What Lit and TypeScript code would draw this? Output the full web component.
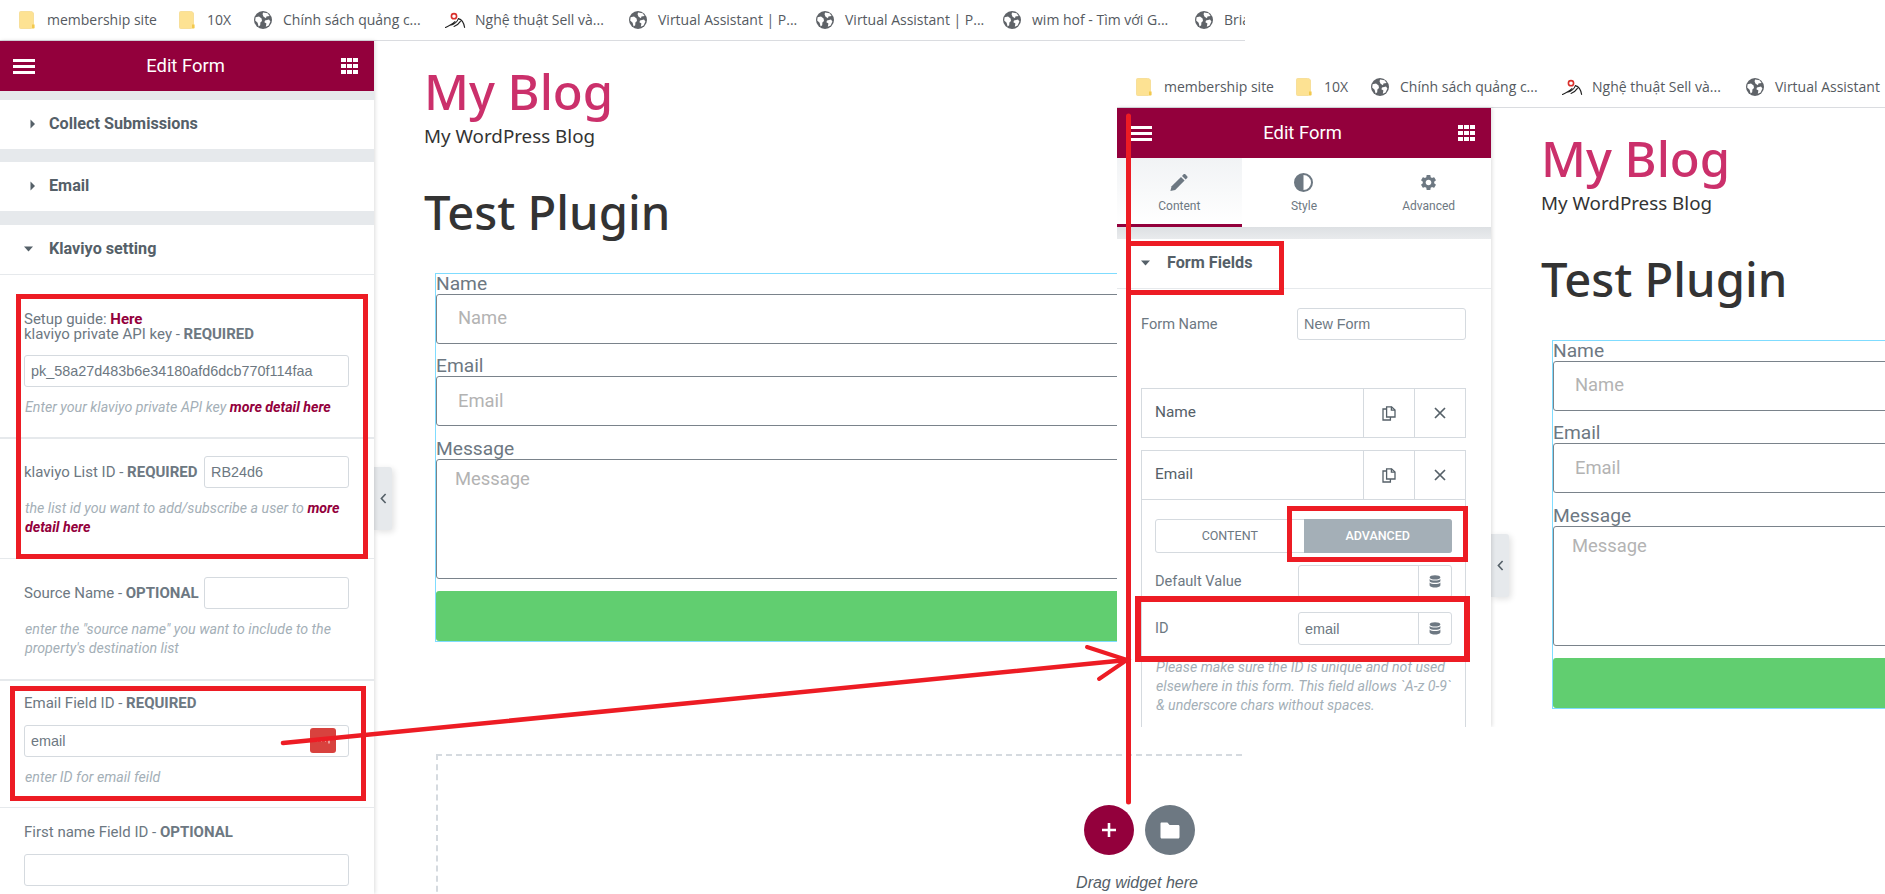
import { LitElement, html, css, svg } from "lit";
import { customElement, property } from "lit/decorators.js";

const CRIMSON = css`#93003c`;

const caretRight = html`<svg class="caret" width="25" height="10" viewBox="0 0 25 10"><path d="M6.5 0.5 L11 5 L6.5 9.5 Z" fill="#556068"/></svg>`;
const caretDown = html`<svg class="caret" width="25" height="10" viewBox="0 0 25 10"><path d="M0 2.5 H9 L4.5 7.5 Z" fill="#556068"/></svg>`;

const globe = html`<svg width="18" height="18" viewBox="0 0 18 18"><circle cx="9" cy="9" r="9" fill="#5f6368"/><path d="M1.6 6.2 L5 5.6 L7.6 7.6 L8 10 L6.4 11.4 L6.2 14.2 L4.6 15.6 L3.6 11.8 L1.2 9.6Z M9 1.6 L13.6 2.2 L15.6 5 L12.4 5.6 L12 7.2 L9.6 5.8 L8.6 3.6Z M11 9.4 L15 8.6 L16.4 10.4 L14.6 14.4 L11.8 15.8 L12.4 12.6 L10.4 11.2Z" fill="#fff"/></svg>`;
const folderMark = html`<svg width="16" height="18" viewBox="0 0 16 18"><path d="M1.5 0.5 H11.5 C13.5 0.5 14.5 1.5 14.5 3 V14 L12.5 17.5 H1.5 C0.8 17.5 0.5 17 0.5 16.5 V1.5 C0.5 1 0.8 0.5 1.5 0.5Z" fill="#fde293" stroke="#f7df9a"/><path d="M13 13.5 H15.6 V16.6 C15.6 17.2 15.2 17.6 14.6 17.6 H13Z" fill="#f3c94d"/></svg>`;
const sellMark = html`<svg width="21" height="16" viewBox="0 0 21 16"><circle cx="9" cy="4.2" r="2.6" fill="none" stroke="#d9302c" stroke-width="1.6"/><path d="M0.5 15.4 C4 13.6 7.5 12.6 10 9.6 M5 13.2 C9 12.6 12 10.4 13.4 6.6 C15 7 18.6 9 19.6 15.4 M9 14.4 C12 13.4 14 11.6 15.4 9.4" fill="none" stroke="#222" stroke-width="1.1" stroke-linecap="round"/></svg>`;

type Mark = "folder" | "globe" | "sell";
const MARKS: Record<Mark, unknown> = { folder: folderMark, globe, sell: sellMark };
const BOOKMARKS: { mark: Mark; text: string; width: number }[] = [
  { mark: "folder", text: "membership site", width: 110 },
  { mark: "folder", text: "10X", width: 25 },
  { mark: "globe", text: "Chính sách quảng c...", width: 140 },
  { mark: "sell", text: "Nghệ thuật Sell và...", width: 132 },
  { mark: "globe", text: "Virtual Assistant | P...", width: 136 },
  { mark: "globe", text: "Virtual Assistant | P...", width: 136 },
  { mark: "globe", text: "wim hof - Tìm với G...", width: 141 },
  { mark: "globe", text: "Brian", width: 60 },
];

@customElement("bookmark-bar")
class BookmarkBar extends LitElement {
  static styles = css`
    :host { display: block; }
    .bar {
      height: 40px; border-bottom: 1px solid #dadce0; box-sizing: content-box;
      display: flex; align-items: center; gap: 22px; padding-left: 19px;
      font: 14px/18px "Open Sans", sans-serif; color: #555a5f; white-space: nowrap; overflow: hidden;
    }
    .item { display: flex; align-items: center; flex: none; }
    .item svg { flex: none; display: block; }
    .folder svg { margin-right: 12px; }
    .globe svg { margin-right: 11px; }
    .sell svg { margin-right: 9px; }
    .text { display: block; }
  `;
  render() {
    return html`<div class="bar">
      ${BOOKMARKS.map(
        (b) => html`<div class="item ${b.mark}">${MARKS[b.mark]}<span class="text" style="width:${b.width}px">${b.text}</span></div>`
      )}
    </div>`;
  }
}

@customElement("panel-header")
class PanelHeader extends LitElement {
  static styles = css`
    :host { display: block; }
    .head {
      height: 50px; background: ${CRIMSON}; color: #fff;
      display: grid; grid-template-columns: 1fr auto 1fr; align-items: center;
      padding: 0 16px 0 13px; font: 18.4px/24px Roboto, sans-serif;
    }
    .menu { display: flex; flex-direction: column; gap: 3px; width: 22px; }
    .menu i { display: block; height: 3px; background: #fff; }
    .grid { justify-self: end; display: grid; grid-template-columns: repeat(3, 4.6px); gap: 1.6px; }
    .grid i { display: block; height: 4.6px; background: #fff; }
  `;
  render() {
    return html`<div class="head">
      <div class="menu"><i></i><i></i><i></i></div>
      <div>Edit Form</div>
      <div class="grid">${Array.from({ length: 9 }, () => html`<i></i>`)}</div>
    </div>`;
  }
}

const panelShared = css`
  :host { display: block; height: 100%; }
  .section {
    box-sizing: border-box; height: 49px; background: #fff; display: flex; align-items: center; padding: 0 0 1px 24px;
    font: 700 16.2px/18px Roboto, sans-serif; color: #556068;
  }
  .caret { flex: none; display: block; }
  .label { font: 15px/15px Roboto, sans-serif; color: #6d7882; white-space: nowrap; }
  .label b { font-weight: 700; }
  .input {
    box-sizing: border-box; height: 32px; border: 1px solid #d5dadf; border-radius: 3px; background: #fff;
    padding: 0 6px; display: flex; align-items: center;
    font: 14.4px/18px "Liberation Sans", sans-serif; color: #6d7882; white-space: nowrap;
  }
  .desc { font: italic 14.2px/19px Roboto, sans-serif; color: #a4afb7; padding-left: 1px; }
  .desc a { font-weight: 700; color: #93003c; }
`;

@customElement("klaviyo-panel")
class KlaviyoPanel extends LitElement {
  static styles = [
    panelShared,
    css`
      .panel { height: 100%; background: #fff; overflow: hidden; }
      .gap9 { height: 9px; background: #e6e9ec; }
      .gap13 { height: 13px; background: #e6e9ec; }
      .gap14 { height: 14px; background: #e6e9ec; }
      .ruled { height: 50px; border-bottom: 1px solid #e6e9ec; }
      .ctrl { padding: 0 25px 0 24px; box-sizing: border-box; }
      .thick { border-bottom: 2px solid #e6e9ec; }
      .thin { border-bottom: 1px solid #e6e9ec; }
      .c1 { height: 164px; padding-top: 36.5px; }
      .c2 { height: 120px; padding-top: 17px; }
      .c3 { height: 122px; padding-top: 18px; }
      .c4 { height: 127px; padding-top: 15px; }
      .c5 { padding-top: 17px; }
      .here { font-weight: 700; color: #93003c; }
      .inline { display: flex; align-items: center; justify-content: space-between; }
      .inline .input { flex: none; width: 145px; }
      .mt14 { margin-top: 14px; }
      .mt13 { margin-top: 13.5px; }
      .below { margin-top: 11px; }
      .wrap { position: relative; }
      .pass {
        position: absolute; right: 13px; top: 3px; width: 26px; height: 25px; border-radius: 3px;
        background: #d8423e; display: flex; align-items: center; justify-content: center;
      }
    `,
  ];
  render() {
    return html`<div class="panel">
      <panel-header></panel-header>
      <div class="gap9"></div>
      <div class="section">${caretRight}Collect Submissions</div>
      <div class="gap13"></div>
      <div class="section">${caretRight}Email</div>
      <div class="gap14"></div>
      <div class="section ruled">${caretDown}Klaviyo setting</div>

      <div class="ctrl c1 thick">
        <div class="label">Setup guide: <span class="here">Here</span></div>
        <div class="label">klaviyo private API key - <b>REQUIRED</b></div>
        <div class="input mt13">pk_58a27d483b6e34180afd6dcb770f114faa</div>
        <div class="desc below">Enter your klaviyo private API key <a>more detail here</a></div>
      </div>
      <div class="ctrl c2 thin">
        <div class="inline"><div class="label">klaviyo List ID - <b>REQUIRED</b></div><div class="input">RB24d6</div></div>
        <div class="desc below">the list id you want to add/subscribe a user to <a>more detail here</a></div>
      </div>
      <div class="ctrl c3 thick">
        <div class="inline"><div class="label">Source Name - <b>OPTIONAL</b></div><div class="input"></div></div>
        <div class="desc below">enter the "source name" you want to include to the property's destination list</div>
      </div>
      <div class="ctrl c4 thin">
        <div class="label">Email Field ID - <b>REQUIRED</b></div>
        <div class="wrap mt14">
          <div class="input">email</div>
          <div class="pass"><svg width="16" height="6" viewBox="0 0 16 6"><path d="M2 3h1M6 3h1M10 3h1M14 0.5v5" stroke="#fff" stroke-width="1.2" opacity=".8"/></svg></div>
        </div>
        <div class="desc below">enter ID for email feild</div>
      </div>
      <div class="ctrl c5">
        <div class="label">First name Field ID - <b>OPTIONAL</b></div>
        <div class="input mt14"></div>
      </div>
    </div>`;
  }
}

const copyIcon = html`<svg width="14" height="15" viewBox="0 0 14 15" fill="none" stroke="#556068" stroke-width="1.3"><path d="M4.6 3 H1 V14 H8.4 V11"/><path d="M4.6 0.8 H9.6 L13 4 V11 H4.6 Z"/><path d="M9.4 0.8 V4.2 H13"/></svg>`;
const closeIcon = html`<svg width="12" height="12" viewBox="0 0 12 12"><path d="M1 1 L11 11 M11 1 L1 11" stroke="#556068" stroke-width="1.7"/></svg>`;
const dbIcon = html`<svg width="12" height="13" viewBox="0 0 12 13" fill="#6d7882"><ellipse cx="6" cy="2.4" rx="5.4" ry="2.2"/><path d="M0.6 4 C2 6 10 6 11.4 4 V6.2 C10 8.2 2 8.2 0.6 6.2Z"/><path d="M0.6 7.6 C2 9.6 10 9.6 11.4 7.6 V10.4 C10 13.2 2 13.2 0.6 10.4Z"/></svg>`;
const pencil = html`<svg width="18" height="18" viewBox="0 0 18 18" fill="#6d7882"><path d="M0.4 17.6 L1.6 12.8 L11 3.4 L14.6 7 L5.2 16.4Z"/><path d="M12 2.4 L13.6 0.8 C14.1 0.3 14.8 0.3 15.3 0.8 L17.2 2.7 C17.7 3.2 17.7 3.9 17.2 4.4 L15.6 6Z"/></svg>`;
const adjust = html`<svg width="19" height="19" viewBox="0 0 19 19"><circle cx="9.5" cy="9.5" r="8.5" fill="#fff" stroke="#6d7882" stroke-width="2"/><path d="M9.5 1 A8.5 8.5 0 0 0 9.5 18Z" fill="#6d7882"/></svg>`;
const cog = html`<svg width="21" height="21" viewBox="0 0 24 24" fill="#6d7882"><path fill-rule="evenodd" d="M19.14 12.94c.04-.3.06-.61.06-.94 0-.32-.02-.64-.07-.94l2.03-1.58a.49.49 0 0 0 .12-.61l-1.92-3.32a.488.488 0 0 0-.59-.22l-2.39.96c-.5-.38-1.03-.7-1.62-.94l-.36-2.54a.484.484 0 0 0-.48-.41h-3.84c-.24 0-.43.17-.47.41l-.36 2.54c-.59.24-1.13.57-1.62.94l-2.39-.96c-.22-.08-.47 0-.59.22L2.74 8.87c-.12.21-.08.47.12.61l2.03 1.58c-.05.3-.09.63-.09.94s.02.64.07.94l-2.03 1.58a.49.49 0 0 0-.12.61l1.92 3.32c.12.22.37.29.59.22l2.39-.96c.5.38 1.03.7 1.62.94l.36 2.54c.05.24.24.41.48.41h3.84c.24 0 .44-.17.47-.41l.36-2.54c.59-.24 1.13-.56 1.62-.94l2.39.96c.22.08.47 0 .59-.22l1.92-3.32c.12-.22.07-.47-.12-.61l-2.01-1.58zM12 15.6c-1.98 0-3.6-1.62-3.6-3.6s1.62-3.6 3.6-3.6 3.6 1.62 3.6 3.6-1.62 3.6-3.6 3.6z"/></svg>`;

@customElement("form-panel")
class FormPanel extends LitElement {
  static styles = [
    panelShared,
    css`
      .panel { height: 100%; background: #fff; overflow: hidden; }
      .tabs { display: grid; grid-template-columns: repeat(3, 1fr); height: 69px; }
      .tab {
        display: flex; flex-direction: column; align-items: center; justify-content: flex-start; padding-top: 15px;
        box-sizing: border-box; font: 12px/14px Roboto, sans-serif; color: #6d7882; gap: 7px;
      }
      .tab svg { height: 19px; display: block; }
      .active { background: linear-gradient(#f1f3f5, #fff); border-bottom: 3px solid #93003c; }
      .strip { height: 12px; background: linear-gradient(#dde0e3, #e9ebed); }
      .title { height: 50px; border-bottom: 1px solid #e6e9ec; }
      .title .caret { margin-right: 1px; }
      .body { padding: 19px 25px 0 24px; }
      .label { font-size: 14.6px; }
      .row { display: flex; align-items: center; justify-content: space-between; }
      .row .input { width: 169px; }
      .rep { margin-top: 48px; border: 1px solid #d5dadf; border-bottom: 0; display: grid; }
      .rep.one { border-bottom: 1px solid #d5dadf; }
      .rep.two { margin-top: 12px; height: 400px; }
      .rep-head { display: grid; grid-template-columns: 1fr 51px 51px; height: 48px; }
      .rep.two .rep-head { border-bottom: 1px solid #d5dadf; }
      .rep-name { display: flex; align-items: center; padding: 0 0 2px 13px; font: 15.4px/18px Roboto, sans-serif; color: #556068; }
      .rep-btn { border-left: 1px solid #d5dadf; display: flex; align-items: center; justify-content: center; }
      .inner { padding: 19px 13px 0 13px; }
      .switch { display: grid; grid-template-columns: 1fr 1fr; height: 34px; border: 1px solid #d5dadf; border-radius: 3px; box-sizing: border-box; font: 12.5px/14px Roboto, sans-serif; text-transform: uppercase; }
      .switch div { display: flex; align-items: center; justify-content: center; color: #6d7882; }
      .switch .on { background: #a4afb7; color: #fff; font-weight: 500; margin: -1px -1px -1px 0; border-radius: 0 3px 3px 0; }
      .field { display: flex; justify-content: space-between; align-items: center; }
      .mt12 { margin-top: 12px; }
      .mt14 { margin-top: 14px; }
      .combo { display: grid; grid-template-columns: 1fr 33px; width: 154px; height: 33px; box-sizing: border-box; border: 1px solid #d5dadf; border-radius: 3px; font: 14.4px/18px "Liberation Sans", sans-serif; color: #6d7882; }
      .combo span { display: flex; align-items: center; padding-left: 6px; }
      .combo i { display: flex; align-items: center; justify-content: center; border-left: 1px solid #d5dadf; }
      .help { margin-top: 13px; }
    `,
  ];
  render() {
    const actions = html`<div class="rep-btn">${copyIcon}</div><div class="rep-btn">${closeIcon}</div>`;
    return html`<div class="panel">
      <panel-header></panel-header>
      <div class="tabs">
        <div class="tab active">${pencil}Content</div>
        <div class="tab">${adjust}Style</div>
        <div class="tab">${cog}Advanced</div>
      </div>
      <div class="strip"></div>
      <div class="section title">${caretDown}Form Fields</div>
      <div class="body">
        <div class="row"><div class="label">Form Name</div><div class="input">New Form</div></div>
        <div class="rep one"><div class="rep-head"><div class="rep-name">Name</div>${actions}</div></div>
        <div class="rep two">
          <div>
            <div class="rep-head"><div class="rep-name">Email</div>${actions}</div>
            <div class="inner">
              <div class="switch"><div>Content</div><div class="on">Advanced</div></div>
              <div class="field mt12"><div class="label">Default Value</div><div class="combo"><span></span><i>${dbIcon}</i></div></div>
              <div class="field mt14"><div class="label">ID</div><div class="combo"><span>email</span><i>${dbIcon}</i></div></div>
              <div class="desc help">Please make sure the ID is unique and not used elsewhere in this form. This field allows \`A-z 0-9\` &amp; underscore chars without spaces.</div>
            </div>
          </div>
        </div>
      </div>
    </div>`;
  }
}

@customElement("page-preview")
class PagePreview extends LitElement {
  static styles = css`
    :host { display: block; position: relative; height: 100%; overflow: hidden; background: #fff; }
    .page { padding: 0 0 0 50px; width: 1480px; box-sizing: border-box; }
    h1, p, h2 { margin: 0; font-family: "Noto Sans", "Open Sans", sans-serif; }
    h1 { padding-top: 20px; font-weight: 500; font-size: 49px; line-height: 60px; color: #cb306b; }
    p { margin-top: 4px; font-size: 18.8px; line-height: 22px; color: #333; }
    h2 { margin-top: 35px; font-weight: 500; font-size: 47.2px; line-height: 60px; color: #333; }
    .form {
      display: block; box-sizing: border-box; margin: 31px 0 0 11px; width: 1410px; border: 1px solid #7fdcff;
      font-family: Roboto, sans-serif;
    }
    .lab { font-size: 19.2px; line-height: 20px; color: #6d7882; }
    .fld {
      box-sizing: border-box; height: 50px; border: 1px solid #7a838b; border-radius: 3px; display: flex; align-items: center;
      padding: 0 0 3px 21px; font-size: 18.4px; color: #b3b3b3; margin-bottom: 12px;
    }
    .wide { margin-bottom: 13px; padding-bottom: 2px; }
    .area { height: 120px; align-items: flex-start; padding: 8px 0 0 18px; }
    .btn { height: 50px; background: #61ce70; border-radius: 3px; color: #fff; display: flex; align-items: center; justify-content: center; font-size: 19.2px; }
    .drop {
      box-sizing: border-box; width: 1406px; margin: 112px 0 0 12px; height: 300px; border: 2px dashed #d5dadf; border-bottom: 0;
      padding-top: 49px; display: flex; flex-direction: column; align-items: center;
    }
    .rounds { display: flex; gap: 11px; }
    .round { width: 50px; height: 50px; border-radius: 50%; display: flex; align-items: center; justify-content: center; }
    .add { background: #93003c; }
    .lib { background: #6d7882; }
    .hint { margin: 18px 4px 0 0; font: italic 16px/20px "Liberation Sans", sans-serif; color: #556068; }
    .handle {
      position: absolute; left: 0; top: 426px; width: 18px; height: 63px; background: #e6e9ec; border-radius: 0 3px 3px 0;
      box-shadow: 2px 2px 6px rgba(0,0,0,.12); display: flex; align-items: center; justify-content: center;
    }
  `;
  render() {
    return html`
      <div class="page">
        <h1>My Blog</h1>
        <p>My WordPress Blog</p>
        <h2>Test Plugin</h2>
      </div>
      <div class="page">
        <div class="form">
          <div class="lab">Name</div>
          <div class="fld">Name</div>
          <div class="lab">Email</div>
          <div class="fld wide">Email</div>
          <div class="lab">Message</div>
          <div class="fld area">Message</div>
          <div class="btn">Send</div>
        </div>
        <div class="drop">
          <div class="rounds">
            <div class="round add"><svg width="16" height="16" viewBox="0 0 16 16"><path d="M8 1 V15 M1 8 H15" stroke="#fff" stroke-width="2.6"/></svg></div>
            <div class="round lib"><svg width="20" height="17" viewBox="0 0 20 17"><path d="M1.6 0.5 H7.4 L9.6 3 H18.2 C19 3 19.5 3.6 19.5 4.4 V15 C19.5 15.9 19 16.5 18.2 16.5 H1.8 C1 16.5 0.5 15.9 0.5 15 V1.6 C0.5 1 1 0.5 1.6 0.5Z" fill="#fff"/></svg></div>
          </div>
          <div class="hint">Drag widget here</div>
        </div>
      </div>
      <div class="handle"><svg width="7" height="11" viewBox="0 0 7 11"><path d="M5.6 1 L1.4 5.5 L5.6 10" fill="none" stroke="#556068" stroke-width="1.6"/></svg></div>
    `;
  }
}

@customElement("site-window")
class SiteWindow extends LitElement {
  @property() kind = "klaviyo";
  static styles = css`
    :host { display: block; height: 100%; background: #fff; overflow: hidden; }
    .stack { display: flex; flex-direction: column; height: 100%; }
    .main { flex: 1; min-height: 0; display: flex; }
    .side { flex: none; width: 374px; position: relative; z-index: 1; box-shadow: 1px 0 4px rgba(0,0,0,.14); height: 100%; }
    .view { flex: 1; min-width: 0; height: 100%; }
  `;
  render() {
    return html`<div class="stack">
      <bookmark-bar></bookmark-bar>
      <div class="main">
        <div class="side">${this.kind === "klaviyo" ? html`<klaviyo-panel></klaviyo-panel>` : html`<form-panel></form-panel>`}</div>
        <div class="view"><page-preview></page-preview></div>
      </div>
    </div>`;
  }
}

const RED = "#ed1c24";

@customElement("app-root")
class AppRoot extends LitElement {
  static styles = css`
    :host { display: block; position: relative; width: 1885px; height: 894px; overflow: hidden; background: #fff; }
    .win { position: absolute; isolation: isolate; }
    .a { left: 0; top: 0; width: 1245px; height: 894px; }
    .b { left: 1117px; top: 67px; width: 768px; height: 660px; }
    .marks { position: absolute; inset: 0; z-index: 5; width: 1885px; height: 894px; pointer-events: none; }
  `;
  render() {
    return html`
      <div class="win a"><site-window kind="klaviyo"></site-window></div>
      <div class="win b"><site-window kind="form"></site-window></div>
      <svg class="marks" viewBox="0 0 1885 894" fill="none" stroke="${RED}">
        ${svg`
          <rect x="18.5" y="296.5" width="347" height="260" stroke-width="5"/>
          <rect x="12.5" y="688.5" width="351" height="110" stroke-width="5"/>
          <rect x="1128.5" y="243.5" width="153" height="49" stroke-width="5"/>
          <rect x="1289.5" y="508.5" width="176" height="51" stroke-width="5"/>
          <rect x="1138" y="599" width="329" height="60" stroke-width="6"/>
          <path d="M1128.5 116 V802" stroke-width="5" stroke-linecap="round"/>
          <path d="M283 743 L1127 660" stroke-width="4.5" stroke-linecap="round"/>
          <path d="M1087 647 L1127 660 L1099 679" stroke-width="4" stroke-linecap="round"/>
        `}
      </svg>
    `;
  }
}
